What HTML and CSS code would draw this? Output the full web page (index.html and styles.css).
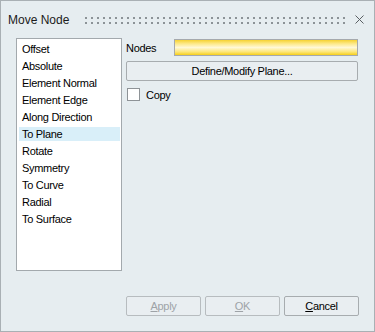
FILE: index.html
```html
<!DOCTYPE html>
<html>
<head>
  <meta charset="UTF-8">
  <title>Move Node</title>
  <link rel="stylesheet" href="styles.css">
</head>
<body>
  <div class="dialog">
    <div class="titlebar">
      <span class="title">Move Node</span>
      <span class="grip"></span>
      <span class="close">
        <svg width="9" height="9" viewBox="0 0 9 9">
          <path d="M0.5 0.5 L8.5 8.5 M8.5 0.5 L0.5 8.5" stroke="#5a5f63" stroke-width="1" fill="none"/>
        </svg>
      </span>
    </div>

    <div class="content">
      <ul class="modes">
        <li>Offset</li>
        <li>Absolute</li>
        <li>Element Normal</li>
        <li>Element Edge</li>
        <li>Along Direction</li>
        <li class="selected">To Plane</li>
        <li>Rotate</li>
        <li>Symmetry</li>
        <li>To Curve</li>
        <li>Radial</li>
        <li>To Surface</li>
      </ul>

      <div class="options">
        <div class="field-row">
          <label class="field-label">Nodes</label>
          <div class="collector"></div>
        </div>
        <button class="btn wide">Define/Modify Plane...</button>
        <label class="check-row">
          <span class="checkbox"></span>
          <span>Copy</span>
        </label>
      </div>
    </div>

    <div class="footer">
      <button class="btn" disabled><u>A</u>pply</button>
      <button class="btn" disabled><u>O</u>K</button>
      <button class="btn"><u>C</u>ancel</button>
    </div>
  </div>
</body>
</html>
```

FILE: styles.css
```css
body {
  margin: 0;
  font-family: "Liberation Sans", Arial, sans-serif;
  font-size: 11px;
  color: #000;
}
.dialog {
  width: 375px;
  height: 332px;
  box-sizing: border-box;
  border: 1px solid #a9b0b4;
  background: #e6edf0;
  display: flex;
  flex-direction: column;
}
.titlebar {
  height: 37px;
  display: flex;
  align-items: center;
  padding-left: 7px;
  padding-right: 10px;
}
.title {
  width: 77px;
  font-size: 12px;
  color: #1b1b1b;
}
.grip {
  width: 260px;
  height: 7px;
  margin-top: 1px;
  background-image:
    linear-gradient(to bottom, transparent 2px, #e6edf0 2px),
    linear-gradient(to right, #8c9397 2px, transparent 2px);
  background-size: 6px 5px;
}
.close {
  margin-left: auto;
  display: flex;
}
.content {
  display: flex;
  gap: 4px;
  padding-left: 15px;
  height: 233px;
}
.modes {
  list-style: none;
  margin: 0;
  padding: 3px 1px 0 2px;
  width: 106px;
  box-sizing: border-box;
  background: #fff;
  border: 1px solid #a3a9ad;
}
.modes li {
  height: 14px;
  line-height: 14px;
  margin-bottom: 3px;
  padding-left: 3px;
  letter-spacing: -0.3px;
  white-space: nowrap;
}
.modes li.selected {
  background: #d9eff9;
}
.options {
  width: 232px;
  display: flex;
  flex-direction: column;
}
.field-row {
  display: flex;
  align-items: center;
  margin-top: 1px;
  height: 17px;
}
.field-label {
  width: 48px;
  letter-spacing: -0.3px;
}
.collector {
  flex: 1;
  height: 17px;
  box-sizing: border-box;
  border: 1px solid #a5a9ad;
  background: linear-gradient(#f6d232 0%, #fde98a 25%, #fff8d6 50%, #fde77c 78%, #f6cf1a 100%);
}
.btn {
  height: 20px;
  box-sizing: border-box;
  border: 1px solid #a7acaf;
  border-radius: 2px;
  background: #e9eef1;
  font-family: "Liberation Sans", Arial, sans-serif;
  font-size: 11px;
  letter-spacing: -0.3px;
  color: #000;
  padding: 0;
}
.btn:disabled {
  color: #9ea3a7;
  border-color: #b7bcbf;
}
.wide {
  margin-top: 5px;
  width: 100%;
}
.check-row {
  display: flex;
  align-items: center;
  gap: 6px;
  margin-top: 7px;
  margin-left: 1px;
  letter-spacing: -0.3px;
}
.checkbox {
  width: 13px;
  height: 13px;
  box-sizing: border-box;
  border: 1px solid #8e9397;
  background: #fff;
}
.footer {
  display: flex;
  justify-content: flex-end;
  gap: 4px;
  margin-top: 25px;
  padding-right: 15px;
}
.footer .btn {
  width: 75px;
}
```
